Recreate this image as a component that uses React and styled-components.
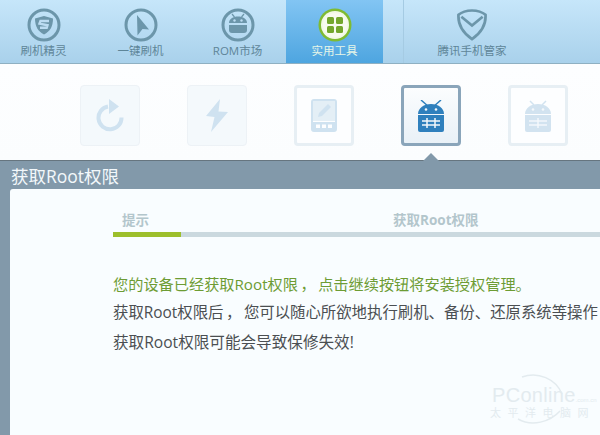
import React from 'react';
import styled, { createGlobalStyle } from 'styled-components';

const Global = createGlobalStyle`
  html, body { margin: 0; padding: 0; background: #fff; }
  body {
    width: 600px;
    height: 435px;
    overflow: hidden;
    font-family: "Open Sans", "Noto Sans CJK SC", sans-serif;
  }
`;

const Page = styled.div`
  position: relative;
  width: 600px;
  height: 435px;
  overflow: hidden;
  display: flex;
  flex-direction: column;
`;

const Nav = styled.nav`
  height: 63px;
  flex: none;
  display: flex;
  border-bottom: 1px solid #8fb0c2;
  background: linear-gradient(#c6e6fa, #a9d1eb);
`;

const Tab = styled.div`
  width: ${(p) => p.$width}px;
  margin-left: ${(p) => p.$offset || 0}px;
  flex: none;
  display: flex;
  flex-direction: column;
  align-items: center;
  padding-top: 8px;
  box-sizing: border-box;
  font-size: 11.5px;
  line-height: 16px;
  color: ${(p) => (p.$active ? '#e6f6e8' : '#5e8598')};
  background: ${(p) => (p.$active ? 'linear-gradient(#82c5f3, #4ea5e0)' : 'none')};
  border-left: ${(p) => (p.$divider ? '1px solid #a5cbe3' : 'none')};
  svg { display: block; margin-bottom: 1px; }
`;

const Tools = styled.div`
  height: 96px;
  flex: none;
  box-sizing: border-box;
  padding: 21px 0 0 80px;
  display: flex;
  gap: 47px;
  background: linear-gradient(#fdfeff, #fbfdfe);
`;

const Tile = styled.div`
  position: relative;
  width: 60px;
  height: 61px;
  flex: none;
  box-sizing: border-box;
  border-radius: 4px;
  display: flex;
  align-items: center;
  justify-content: center;
  border: ${(p) =>
    p.$kind === 'active' ? '3px solid #8aa5ba' : p.$kind === 'framed' ? '3px solid #e7eff4' : '1px solid #edf2f6'};
  background: ${(p) =>
    p.$kind === 'active'
      ? 'linear-gradient(#fbfdfe, #e9f1f7)'
      : p.$kind === 'framed'
        ? '#fdfeff'
        : '#f4f9fc'};
`;

const Pointer = styled.span`
  position: absolute;
  left: 50%;
  bottom: -18px;
  margin-left: -8px;
  border: 8px solid transparent;
  border-top: 0;
  border-bottom-color: #8299aa;
`;

const Band = styled.section`
  flex: 1;
  display: flex;
  flex-direction: column;
  padding-left: 10px;
  border-top: 1px solid #66757f;
  background: #8299aa;
`;

const BandTitle = styled.h1`
  margin: 0 0 0 1px;
  height: 28px;
  font-size: 17.5px;
  font-weight: 400;
  line-height: 30px;
  color: #f3f8fb;
`;

const Panel = styled.div`
  flex: 1;
  padding: 21px 0 0 103px;
  border-radius: 3px 0 0 0;
  background: #f9fdff;
  white-space: nowrap;
`;

const Steps = styled.div`
  display: flex;
  font-size: 13.5px;
  font-weight: 700;
  line-height: 20px;
  color: #b3c6cc;
`;

const Step = styled.span`
  width: ${(p) => p.$width}px;
  padding-left: ${(p) => p.$indent}px;
  box-sizing: border-box;
  flex: none;
`;

const Track = styled.div`
  height: 5px;
  margin: 2px 0 33px;
  background: #cbd9df;
`;

const Fill = styled.div`
  width: 68px;
  height: 100%;
  background: #9dbf2c;
`;

const Line = styled.p`
  margin: 0;
  height: ${(p) => (p.$accent ? 28 : 30)}px;
  font-size: ${(p) => p.$size}px;
  line-height: 29px;
  color: ${(p) => (p.$accent ? '#6d9c34' : '#4b4f52')};
`;

// the comma sits centred in its cell in the original client
const Mark = styled.span`
  padding: 0 2.5px;
`;

const Watermark = styled.div`
  position: absolute;
  right: 0;
  bottom: 0;
  width: 120px;
  height: 70px;
  color: #e3ebef;
`;

const WaterArc = styled.svg`
  position: absolute;
  left: 0;
  top: 0;
`;

const WaterBrand = styled.div`
  position: absolute;
  left: 12px;
  top: 21px;
  font-family: "Liberation Sans", sans-serif;
  font-size: 20px;
  line-height: 18px;
  letter-spacing: 0.3px;
  small { font-size: 6px; letter-spacing: 0; }
`;

const WaterCaption = styled.div`
  position: absolute;
  left: 10px;
  top: 41px;
  font-size: 11px;
  line-height: 13px;
  letter-spacing: 6.500px;
`;

const ring = '#6c96aa';

const Ring = ({ children, color = ring }) => (
  <svg width="34" height="34" viewBox="0 0 34 34">
    <circle cx="17" cy="17" r="15" fill="none" stroke={color} strokeWidth="3" />
    {children}
  </svg>
);

const ShieldIcon = () => (
  <Ring>
    <path d="M8 10.5 17 8l9 2.500c0 8-3 13-9 16-6-3-9-8-9-16z" fill={ring} />
    <path d="M22 13h-8.500l-1 2.700 8 1.500-.8 2.500H13" fill="none" stroke="#bcdcf2" strokeWidth="2.400" />
  </Ring>
);

const ArrowIcon = () => (
  <Ring>
    <path d="M13 7 25 21.500l-6.500-.5-5 6.500z" fill={ring} />
  </Ring>
);

const RobotIcon = () => (
  <Ring>
    <path d="M8 15c0-4 4-6.500 9-6.500s9 2.500 9 6.500z" fill={ring} />
    <path d="M8 17h18v5a3 3 0 0 1-3 3H11a3 3 0 0 1-3-3z" fill={ring} />
    <path d="m11 6 2.500 3M23 6l-2.500 3" stroke={ring} strokeWidth="1.200" />
    <circle cx="13.500" cy="12.500" r="1.200" fill="#bcdcf2" />
    <circle cx="20.500" cy="12.500" r="1.200" fill="#bcdcf2" />
  </Ring>
);

const GridIcon = () => (
  <svg width="34" height="34" viewBox="0 0 34 34">
    <circle cx="17" cy="17" r="16.500" fill="#7fbb32" />
    <circle cx="17" cy="17" r="14" fill="#f3f9e6" />
    <circle cx="17" cy="17" r="12" fill="#f8fbef" />
    <rect x="9" y="9" width="7" height="7" rx="1.500" fill="#74a72d" />
    <rect x="18" y="9" width="7" height="7" rx="1.500" fill="#74a72d" />
    <rect x="9" y="18" width="7" height="7" rx="1.500" fill="#74a72d" />
    <rect x="18" y="18" width="7" height="7" rx="1.500" fill="#74a72d" />
  </svg>
);

const GuardIcon = () => (
  <svg width="30" height="34" viewBox="1.500 0 31 35">
    <path d="M17 2.500c6 0 10.500 1.500 14 4.500 .5 10-5 19-14 25C8 26 2.500 17 3 7c3.500-3 8-4.500 14-4.500z" fill="none" stroke={ring} strokeWidth="2.800" />
    <path d="m6 9 11 9 11-9" fill="none" stroke={ring} strokeWidth="2.800" />
  </svg>
);

const RefreshIcon = () => (
  <svg width="28" height="33" viewBox="0 0 28 33">
    <path d="M25.500 18.500A11.500 11.500 0 1 1 12 7.500" fill="none" stroke="#cfe2f0" strokeWidth="4" />
    <path d="M13 0l10 7.500L13 15z" fill="#cfe2f0" />
  </svg>
);

const BoltIcon = () => (
  <svg width="22" height="33" viewBox="0 0 22 33">
    <path d="M14 0 0 17l8.500 1L5 33 22 13l-9.500-.5z" fill="#cfe2f0" />
  </svg>
);

const TabletIcon = () => (
  <svg width="26" height="33" viewBox="0 0 26 33">
    <rect x="1" y="1" width="24" height="31" rx="2" fill="none" stroke="#cfe2f0" strokeWidth="2" />
    <rect x="2" y="2" width="22" height="20" fill="#e4eff6" />
    <path d="M7 18l1-4 9-9 3 3-9 9z" fill="#cfe2f0" />
    <rect x="2" y="23" width="22" height="9" fill="#cfe2f0" />
    <rect x="5" y="25.500" width="4" height="3.500" fill="#fdfeff" />
    <rect x="11" y="25.500" width="4" height="3.500" fill="#fdfeff" />
    <rect x="17" y="25.500" width="4" height="3.500" fill="#fdfeff" />
  </svg>
);

const DroidBox = ({ color, line, tilted }) => (
  <svg width="28" height="32" viewBox="0 0 28 32">
    <path d="M1 14C1 8 7 4 14 4s13 4 13 10z" fill={color} />
    <path d="M1 15h26v15a2 2 0 0 1-2 2H3a2 2 0 0 1-2-2z" fill={color} />
    <path
      d={tilted ? 'M4 0l8 7M24 0l-8 7' : 'M6 1l4 4M22 1l-4 4'}
      stroke={color}
      strokeWidth="1.500"
    />
    <circle cx="9" cy="9.500" r="1.300" fill="#f4f8fb" />
    <circle cx="19" cy="9.500" r="1.300" fill="#f4f8fb" />
    <path
      d={tilted ? 'M5 21h18M5 25h18M10 18v10M18 18v10' : 'M5 21h18M5 25h18M14 18v10'}
      stroke={line}
      strokeWidth="1.500"
    />
  </svg>
);

const tabs = [
  { label: '刷机精灵', icon: <ShieldIcon />, width: 97, offset: -5 },
  { label: '一键刷机', icon: <ArrowIcon />, width: 97 },
  { label: 'ROM市场', icon: <RobotIcon />, width: 97 },
  { label: '实用工具', icon: <GridIcon />, width: 97, active: true },
  { label: '腾讯手机管家', icon: <GuardIcon />, width: 137, offset: 20, divider: true },
];

export default function App() {
  return (
    <Page>
      <Global />
      <Nav>
        {tabs.map((t) => (
          <Tab key={t.label} $width={t.width} $offset={t.offset} $active={t.active} $divider={t.divider}>
            {t.icon}
            {t.label}
          </Tab>
        ))}
      </Nav>
      <Tools>
        <Tile><RefreshIcon /></Tile>
        <Tile><BoltIcon /></Tile>
        <Tile $kind="framed"><TabletIcon /></Tile>
        <Tile $kind="active">
          <DroidBox color="#2f80bd" line="#f4f8fb" tilted />
          <Pointer />
        </Tile>
        <Tile $kind="framed"><DroidBox color="#d2e3f0" line="#f4f8fb" /></Tile>
      </Tools>
      <Band>
        <BandTitle>获取Root权限</BandTitle>
        <Panel>
          <Steps>
            <Step $width={280} $indent={9}>提示</Step>
            <Step $width={200} $indent={0}>获取Root权限</Step>
          </Steps>
          <Track><Fill /></Track>
          <Line $accent $size={15.2}>您的设备已经获取Root权限<Mark>，</Mark>点击继续按钮将安装授权管理。</Line>
          <Line $size={15.4}>获取Root权限后<Mark>，</Mark>您可以随心所欲地执行刷机、备份、还原系统等操作</Line>
          <Line $size={15.6}>获取Root权限可能会导致保修失效!</Line>
        </Panel>
      </Band>
      <Watermark>
        <WaterArc width="120" height="70" viewBox="0 0 120 70">
          <path d="M42 12c16-6 34 2 40 17M38 54c14 8 32 3 42-8" fill="none" stroke="#e3ebef" strokeWidth="1.500" />
        </WaterArc>
        <WaterBrand>PConline<small>.com.cn</small></WaterBrand>
        <WaterCaption>太平洋电脑网</WaterCaption>
      </Watermark>
    </Page>
  );
}
